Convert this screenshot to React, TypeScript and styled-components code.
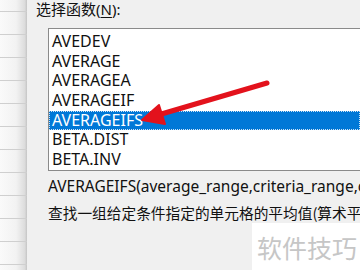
import React from 'react';
import styled, { createGlobalStyle } from 'styled-components';

const GlobalStyle = createGlobalStyle`
  html, body {
    margin: 0;
    padding: 0;
    width: 360px;
    height: 270px;
    overflow: hidden;
    background: #f0f0f0;
  }
`;

const Screen = styled.div`
  position: relative;
  display: flex;
  width: 360px;
  height: 270px;
  overflow: hidden;
  font-family: "Noto Sans", "Noto Sans CJK SC", sans-serif;
  color: #111;
`;

const Sheet = styled.div`
  flex: 0 0 27px;
  display: flex;
  flex-direction: column;
  padding-top: 11px;
  background: linear-gradient(to right, #fafafa 0%, #f2f2f2 60%, #dcdcdc 92%, #c4c4c4 100%);
`;

const SheetRow = styled.div`
  flex: 0 0 23px;
  border-top: 1px solid #cfcfcf;
  box-sizing: border-box;
`;

const Dialog = styled.div`
  flex: 1;
  min-width: 0;
  display: flex;
  flex-direction: column;
  padding-left: 9px;
  background: #f0f0f0;
`;

const Label = styled.div`
  height: 28px;
  line-height: 18px;
  font-size: 15px;
  white-space: nowrap;
  u {
    text-decoration: underline;
    text-underline-offset: 2px;
  }
`;

const ListBox = styled.div`
  margin-left: 12px;
  height: 143px;
  box-sizing: border-box;
  border: 1px solid #8a8a8a;
  border-right: none;
  background: #fff;
  padding-top: 3px;
  display: flex;
  flex-direction: column;
`;

const Item = styled.div<{ $selected?: boolean }>`
  height: 19.7px;
  line-height: 19.7px;
  padding-left: 3px;
  font-size: 16px;
  box-sizing: border-box;
  white-space: nowrap;
  color: ${p => (p.$selected ? '#fff' : '#111')};
  background: ${p => (p.$selected ? '#0078d7' : 'transparent')};
  outline: ${p => (p.$selected ? '1px dotted #cfe3f5' : 'none')};
  outline-offset: -1px;
`;

const Description = styled.div`
  margin-left: 12px;
  padding-top: 5px;
  display: flex;
  flex-direction: column;
  gap: 5px;
  white-space: nowrap;
`;

const Syntax = styled.div`
  font-size: 15.5px;
  line-height: 21px;
`;

const Summary = styled.div`
  font-size: 14.7px;
  line-height: 21px;
  font-family: "Noto Sans CJK SC", "Noto Sans", sans-serif;
`;

const Watermark = styled.div`
  position: absolute;
  left: 252px;
  top: 223px;
  width: 108px;
  height: 47px;
  background: #fff;
  display: flex;
  align-items: center;
  padding-left: 5px;
  box-sizing: border-box;
  font-family: "Noto Sans CJK SC", sans-serif;
  font-size: 25px;
  color: #c6c6c6;
  white-space: nowrap;
`;

const Arrow = styled.svg`
  position: absolute;
  left: 0;
  top: 0;
  pointer-events: none;
`;

const functions = ['AVEDEV', 'AVERAGE', 'AVERAGEA', 'AVERAGEIF', 'AVERAGEIFS', 'BETA.DIST', 'BETA.INV'];

const App = () => {
  return (
    <Screen>
      <GlobalStyle />
      <Sheet>
        {Array.from({ length: 12 }).map((_, i) => (
          <SheetRow key={i} />
        ))}
      </Sheet>
      <Dialog>
        <Label>
          选择函数(<u>N</u>):
        </Label>
        <ListBox>
          {functions.map(name => (
            <Item key={name} $selected={name === 'AVERAGEIFS'}>
              {name}
            </Item>
          ))}
        </ListBox>
        <Description>
          <Syntax>AVERAGEIFS(average_range,criteria_range,criteria,...)</Syntax>
          <Summary>查找一组给定条件指定的单元格的平均值(算术平均值)</Summary>
        </Description>
      </Dialog>
      <Watermark>软件技巧</Watermark>
      <Arrow width="360" height="270" viewBox="0 0 360 270">
        <line x1="267" y1="83" x2="158" y2="115" stroke="#e3121c" strokeWidth="5" strokeLinecap="round" />
        <polygon points="142,120 159,105 165,124" fill="#e3121c" stroke="#e3121c" strokeWidth="2" strokeLinejoin="round" />
      </Arrow>
    </Screen>
  );
};

export default App;
